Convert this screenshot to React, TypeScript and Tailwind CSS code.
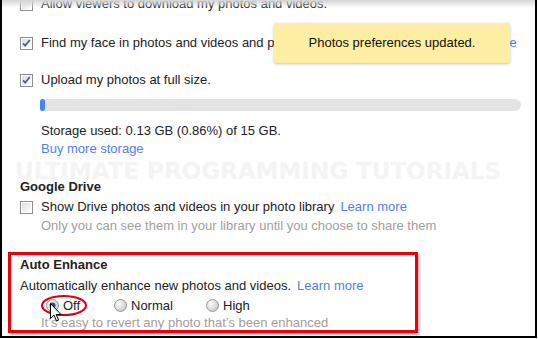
const Checkbox = ({ checked = false }: { checked?: boolean }) => (
  <svg width="13" height="13" viewBox="0 0 13 13" className="shrink-0">
    <defs>
      <linearGradient id="cbg" x1="0" y1="0" x2="1" y2="1">
        <stop offset="0" stopColor="#dcdcdc" />
        <stop offset="1" stopColor="#ffffff" />
      </linearGradient>
    </defs>
    <rect x="0.5" y="0.5" width="12" height="12" fill="#fff" stroke="#8f8f8f" />
    <rect x="2" y="2" width="9" height="9" fill="url(#cbg)" />
    {checked && (
      <path d="M3 6.3 L5.2 8.6 L9.8 3" fill="none" stroke="#4f6396" strokeWidth="1.8" />
    )}
  </svg>
);

const Radio = ({ checked = false }: { checked?: boolean }) => (
  <svg width="13" height="13" viewBox="0 0 13 13" className="shrink-0">
    <defs>
      <radialGradient id="rbg" cx="0.35" cy="0.35" r="0.7">
        <stop offset="0" stopColor="#ffffff" />
        <stop offset="1" stopColor="#c8c8c8" />
      </radialGradient>
    </defs>
    <circle cx="6.5" cy="6.5" r="6" fill="url(#rbg)" stroke="#9a9a9a" />
    {checked && <circle cx="6.5" cy="6.5" r="3" fill="#2e4d7e" />}
  </svg>
);

const Link = ({ children, tight = false }: { children: React.ReactNode; tight?: boolean }) => (
  <span className={tight ? "text-[#4f82ef] ml-[1px]" : "text-[#4f82ef] ml-[6px]"}>{children}</span>
);

export default function App() {
  return (
    <div className="w-[538px] h-[339px] bg-white">
      <div
        className="relative w-[537px] h-[338px] overflow-hidden border-x-2 border-b-2 border-black bg-white text-[13px] text-[#222]"
        style={{ fontFamily: '"Liberation Sans", Arial, sans-serif' }}
      >
        {/* top shadow */}
        <div className="absolute inset-x-0 top-0 h-[8px] bg-gradient-to-b from-[#d6d6d6] to-transparent z-10" />

        {/* watermark */}
        <div
          className="absolute left-[13px] top-[160px] text-[23px] font-bold tracking-[0px] text-[#f4f4f4] whitespace-nowrap leading-none"
          style={{ fontFamily: '"DejaVu Sans", sans-serif' }}
        >
          ULTIMATE PROGRAMMING TUTORIALS
        </div>

        <div className="relative pl-[18px] flex flex-col">
          <div className="h-5 mt-[-6px] flex items-center gap-2 whitespace-nowrap">
            <Checkbox />
            <span>Allow viewers to download my photos and videos.</span>
          </div>

          <div className="h-5 mt-[19px] flex items-center gap-2 whitespace-nowrap">
            <Checkbox checked />
            <span>
              Find my face in photos and videos and prompt people I know to tag me
              <Link tight>Learn more</Link>
            </span>
          </div>

          <div className="h-5 mt-[17px] flex items-center gap-2 whitespace-nowrap">
            <Checkbox checked />
            <span>Upload my photos at full size.</span>
          </div>

          <div className="ml-[20px] mt-[9px] w-[481px] h-[12px] rounded-full bg-[#e4e4e4] flex">
            <div className="w-[5px] h-full rounded-full bg-[#4285f4]" />
          </div>

          <div className="ml-[21px] mt-[11px] h-[18px] flex items-center">
            Storage used: 0.13 GB (0.86%) of 15 GB.
          </div>
          <div className="ml-[21px] h-[18px] flex items-center text-[#4f82ef]">
            Buy more storage
          </div>

          <div className="mt-[19px] h-5 flex items-center font-bold">Google Drive</div>
          <div className="h-5 flex items-center gap-2 whitespace-nowrap">
            <Checkbox />
            <span>
              Show Drive photos and videos in your photo library
              <Link>Learn more</Link>
            </span>
          </div>
          <div className="ml-[21px] h-[18px] flex items-center text-[#a0a0a0] whitespace-nowrap">
            Only you can see them in your library until you choose to share them
          </div>

          {/* Auto Enhance */}
          <div className="relative ml-[-12px] mt-[17px] w-[410px] h-[81px] border-[3px] border-[#e8000b] shadow-[2px_2px_2px_rgba(0,0,0,0.25)] pl-[9px] flex flex-col">
            <div className="h-5 shrink-0 flex items-center font-bold">Auto Enhance</div>
            <div className="h-5 shrink-0 mt-[1px] flex items-center whitespace-nowrap">
              <span>
                Automatically enhance new photos and videos.
                <Link>Learn more</Link>
              </span>
            </div>
            <div className="h-[19px] shrink-0 flex items-center pl-[26px]">
              <div className="flex items-center gap-[4px] w-[68px]">
                <Radio checked />
                <span>Off</span>
              </div>
              <div className="flex items-center gap-[4px] w-[92px]">
                <Radio />
                <span>Normal</span>
              </div>
              <div className="flex items-center gap-[4px]">
                <Radio />
                <span>High</span>
              </div>
            </div>
            <div className="h-[15px] shrink-0 pl-[21px] leading-[15px] text-[#a0a0a0] whitespace-nowrap">
              It’s easy to revert any photo that’s been enhanced
            </div>

            {/* red annotation ellipse */}
            <svg
              className="absolute left-[29px] top-[39px]"
              width="48"
              height="23"
              viewBox="0 0 48 23"
            >
              <ellipse cx="24" cy="11.5" rx="22" ry="9.5" fill="none" stroke="#e00010" strokeWidth="2" />
            </svg>

            {/* cursor */}
            <svg
              className="absolute left-[39px] top-[48px]"
              width="12"
              height="19"
              viewBox="0 0 12 19"
            >
              <path
                d="M0.5 0.5 L0.5 15.5 L4 12.2 L6.5 18 L8.6 17.1 L6.2 11.5 L11 11.5 Z"
                fill="#fff"
                stroke="#000"
                strokeWidth="1"
                strokeLinejoin="round"
              />
            </svg>
          </div>
        </div>

        {/* toast */}
        <div className="absolute left-[272px] top-[23px] w-[236px] h-[40px] rounded-[3px] bg-[#fdeea3] shadow-[0_1px_3px_rgba(0,0,0,0.25)] flex items-center justify-center text-[#111] z-20">
          Photos preferences updated.
        </div>
      </div>
    </div>
  );
}
